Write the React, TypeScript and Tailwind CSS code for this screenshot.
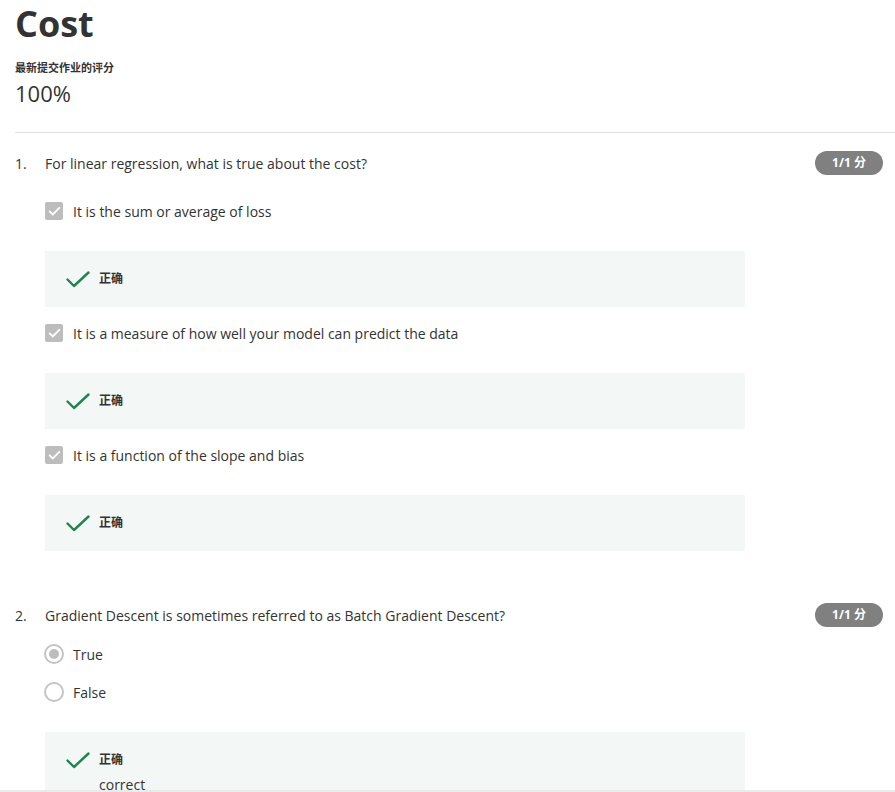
import React from "react";

const font = { fontFamily: '"Open Sans", "Noto Sans CJK SC", sans-serif' };

const CheckMark = () => (
  <svg width="24" height="17" viewBox="0 0 24 17" fill="none">
    <path d="M1.5 8.5 L8 15 L22.5 1.5" stroke="#1f8354" strokeWidth="2.4" strokeLinecap="round" strokeLinejoin="round" />
  </svg>
);

const Badge = () => (
  <div className="flex h-[24px] w-[68px] items-center justify-center rounded-full bg-[#808080] text-[12px] font-bold text-white">
    1/1 分
  </div>
);

const Question = ({ num, text }: { num: string; text: string }) => (
  <div className="flex h-[24px] items-center pl-[15px] pr-[12px]">
    <span className="w-[30px] text-[14px] text-[#333]">{num}</span>
    <span className="flex-1 text-[14px] text-[#333]">{text}</span>
    <Badge />
  </div>
);

const CheckOption = ({ text, className }: { text: string; className?: string }) => (
  <div className={`ml-[45px] flex h-[18px] items-center ${className ?? ""}`}>
    <div className="flex h-[18px] w-[18px] items-center justify-center rounded-[2px] bg-[#bdbdbd]">
      <svg width="13" height="10" viewBox="0 0 13 10" fill="none">
        <path d="M1.2 5 L4.8 8.4 L11.8 1.4" stroke="#fff" strokeWidth="1.8" />
      </svg>
    </div>
    <span className="ml-[10px] text-[14px] text-[#333]">{text}</span>
  </div>
);

const RadioOption = ({ text, checked, className }: { text: string; checked?: boolean; className?: string }) => (
  <div className={`ml-[44px] flex h-[20px] items-center ${className ?? ""}`}>
    <div className="flex h-[20px] w-[20px] items-center justify-center rounded-full border-2 border-[#c4c4c4]">
      {checked && <div className="h-[10px] w-[10px] rounded-full bg-[#bdbdbd]" />}
    </div>
    <span className="ml-[9px] text-[14px] text-[#333]">{text}</span>
  </div>
);

const Feedback = ({ className, extra }: { className?: string; extra?: string }) => (
  <div className={`ml-[45px] w-[700px] bg-[#f3f8f6] py-[20px] pl-[21px] pr-[20px] ${className ?? ""}`}>
    <div className="flex h-[16px] items-center">
      <CheckMark />
      <span className="ml-[9px] text-[12px] font-bold text-[#333]">正确</span>
    </div>
    {extra && <div className="ml-[33px] mt-[7px] text-[14px] leading-[20px] text-[#333]">{extra}</div>}
  </div>
);

export default function App() {
  return (
    <div className="relative h-[792px] w-[895px] overflow-hidden bg-white" style={font}>
      <div className="pl-[15px]">
        <h1 className="text-[36px] font-bold leading-[48px] text-[#333]">Cost</h1>
        <p className="mt-[12px] text-[11px] font-bold leading-[16px] text-[#333]">最新提交作业的评分</p>
        <p className="mt-[2px] text-[22px] leading-[30px] text-[#333]">100%</p>
        <div className="mt-[24px] h-px bg-[#e1e1e1]" />
      </div>

      <div className="mt-[18px]">
        <Question num="1." text="For linear regression, what is true about the cost?" />
        <CheckOption className="mt-[27px]" text="It is the sum or average of loss" />
        <Feedback className="mt-[31px]" />
        <CheckOption className="mt-[17px]" text="It is a measure of how well your model can predict the data" />
        <Feedback className="mt-[31px]" />
        <CheckOption className="mt-[17px]" text="It is a function of the slope and bias" />
        <Feedback className="mt-[31px]" />
      </div>

      <div className="mt-[52px]">
        <Question num="2." text="Gradient Descent is sometimes referred to as Batch Gradient Descent?" />
        <RadioOption className="mt-[17px]" text="True" checked />
        <RadioOption className="mt-[18px]" text="False" />
        <Feedback className="mt-[30px]" extra="correct" />
      </div>

      <div className="absolute bottom-0 left-0 h-[2px] w-full bg-[#ebebeb]" />
    </div>
  );
}
